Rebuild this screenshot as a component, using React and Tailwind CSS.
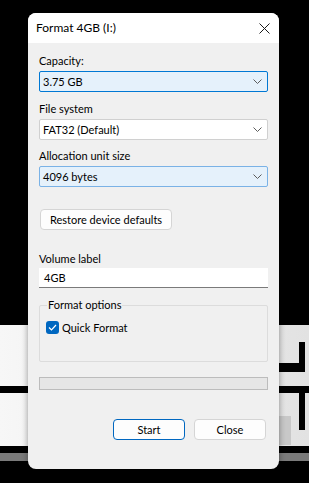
import React from 'react';

const font = { fontFamily: 'Lato, "Noto Sans", "Liberation Sans", sans-serif' };

const Chevron = () => (
  <svg width="9" height="5" viewBox="0 0 9 5" className="shrink-0">
    <path d="M0.5 0.5 L4.5 4.5 L8.5 0.5" fill="none" stroke="#5c5c5c" strokeWidth="1" />
  </svg>
);

const Select = ({ value, variant }) => {
  const styles = {
    focus: 'bg-[#e5f1fb] border-[#0078d4]',
    hover: 'bg-[#e5f1fb] border-[#7ab2e6]',
    plain: 'bg-white border-[#d0d0d0]',
  };
  return (
    <div className={`h-[21px] w-[229px] border rounded-[2px] flex items-center justify-between pl-[3px] pr-[5px] ${styles[variant]}`}>
      <span className="text-[11px] leading-none text-black">{value}</span>
      <Chevron />
    </div>
  );
};

const Label = ({ children, className = '' }) => (
  <div className={`text-[11px] leading-[16px] text-black ${className}`}>{children}</div>
);

const App = () => {
  return (
    <div className="relative w-[309px] h-[483px] bg-black overflow-hidden" style={font}>
      {/* background desktop stuff behind the dialog */}
      <div className="absolute left-0 top-[325px] w-[309px] h-[61px] bg-gradient-to-r from-[#f7f7f7] to-[#e2e2e2]" />
      <div className="absolute left-0 top-[393px] w-[309px] h-[53px] bg-gradient-to-r from-[#f7f7f7] to-[#e2e2e2]" />
      <div className="absolute left-0 top-[453px] w-[309px] h-[8px] bg-[#7a7a7a]" />
      <div className="absolute left-[299px] top-[342px] w-[6px] h-[21px] bg-black" />
      <div className="absolute left-[279px] top-[363px] w-[26px] h-[9px] bg-black" />
      <div className="absolute left-[299px] top-[393px] w-[6px] h-[37px] bg-black" />
      <div className="absolute left-[279px] top-[416px] w-[12px] h-[29px] bg-[#c8c8c8]" />

      {/* dialog */}
      <div className="relative ml-[28px] mt-[13px] w-[251px] h-[456px] rounded-[8px] overflow-hidden bg-[#f0f0f0] flex flex-col shadow-[0_0_6px_rgba(0,0,0,0.4)]">
        <div className="h-[30px] bg-white flex items-center justify-between pl-[8px] pr-[9px] shrink-0">
          <span className="text-[12px] text-black whitespace-nowrap">Format 4GB (I:)</span>
          <svg width="11" height="11" viewBox="0 0 11 11">
            <path d="M0.5 0.5 L10.5 10.5 M10.5 0.5 L0.5 10.5" stroke="#1a1a1a" strokeWidth="1" />
          </svg>
        </div>

        <div className="pl-[11px] flex flex-col">
          <Label className="mt-[10px]">Capacity:</Label>
          <div className="mt-[2px]">
            <Select value="3.75 GB" variant="focus" />
          </div>
          <Label className="mt-[9px]">File system</Label>
          <div className="mt-[2px]">
            <Select value="FAT32 (Default)" variant="plain" />
          </div>
          <Label className="mt-[8px]">Allocation unit size</Label>
          <div className="mt-[2px]">
            <Select value="4096 bytes" variant="hover" />
          </div>

          <button className="mt-[22px] ml-[1px] w-[132px] h-[21px] bg-[#fdfdfd] border border-[#d5d5d5] rounded-[4px] text-[11px] leading-none text-black text-center whitespace-nowrap">
            Restore device defaults
          </button>

          <Label className="mt-[21px]">Volume label</Label>
          <div className="mt-[1px] h-[20px] w-[229px] bg-white border-b border-[#7a7a7a] flex items-center pl-[5px] text-[11px] leading-none text-black">
            4GB
          </div>

          <div className="mt-[17px] w-[229px] h-[57px] border border-[#dcdcdc] rounded-[2px] relative">
            <span className="absolute left-[7px] top-[-9px] bg-[#f0f0f0] px-[1px] text-[11px] leading-[16px] text-black whitespace-nowrap">
              Format options
            </span>
            <div className="flex items-center gap-[3px] mt-[15px] ml-[6px]">
              <div className="w-[13px] h-[13px] rounded-[3px] bg-[#0067c0] flex items-center justify-center">
                <svg width="9" height="7" viewBox="0 0 9 7">
                  <path d="M1 3.5 L3.5 6 L8 1" fill="none" stroke="white" strokeWidth="1.2" />
                </svg>
              </div>
              <span className="text-[11px] leading-none text-black">Quick Format</span>
            </div>
          </div>

          <div className="mt-[15px] w-[229px] h-[13px] bg-[#e6e6e6] border border-[#bcbcbc]" />

          <div className="mt-[29px] flex gap-[9px] pl-[74px]">
            <button className="w-[72px] h-[21px] bg-[#fdfdfd] border border-[#0067c0] rounded-[4px] text-[11px] leading-none text-black">
              Start
            </button>
            <button className="w-[72px] h-[21px] bg-[#fdfdfd] border border-[#d5d5d5] rounded-[4px] text-[11px] leading-none text-black">
              Close
            </button>
          </div>
        </div>
      </div>
    </div>
  );
};

export default App;
